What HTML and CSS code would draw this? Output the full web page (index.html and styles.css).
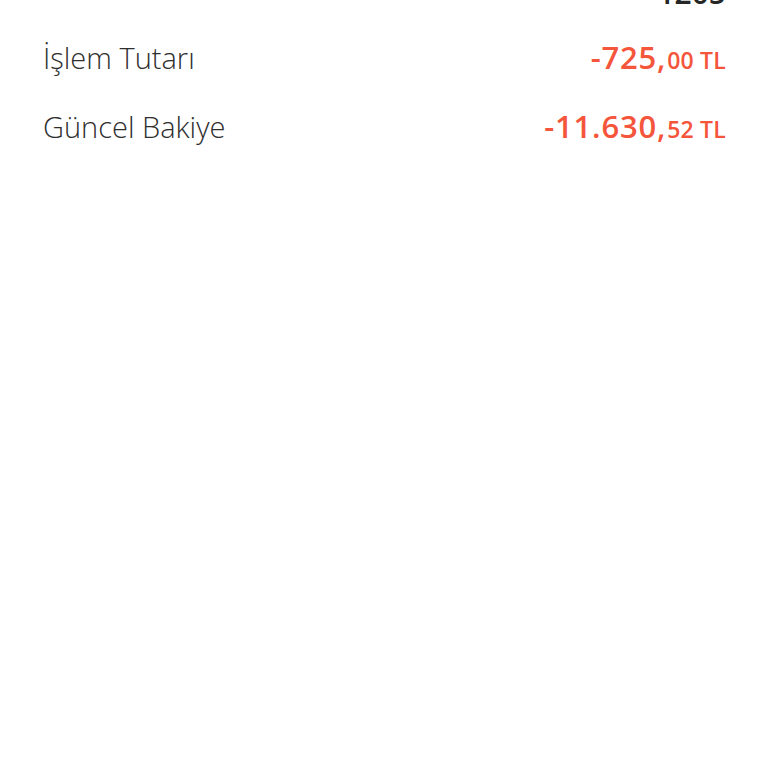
FILE: index.html
```html
<!DOCTYPE html>
<html lang="tr">
<head>
  <meta charset="UTF-8" />
  <meta name="viewport" content="width=device-width, initial-scale=1.0"/>
  <title>İşlem Detayı</title>
  <link rel="stylesheet" href="styles.css">
</head>
<body>

  <!-- Detay listesi -->
  <div class="details">
    <div class="row head">
      <span class="label"></span>
      <span class="value plain">1205</span>
    </div>
    <div class="row">
      <span class="label">İşlem Tutarı</span>
      <span class="value neg">-725,<small>00 TL</small></span>
    </div>
    <div class="row">
      <span class="label">Güncel Bakiye</span>
      <span class="value neg">-11.630,<small>52 TL</small></span>
    </div>
  </div>

</body>
</html>
```

FILE: styles.css
```css
* {
  box-sizing: border-box;
}

body {
  font-family: "Open Sans", Arial, sans-serif;
  background: #ffffff;
  color: #333333;
  margin: 0;
  padding: 0;
  overflow: hidden;
}

.details {
  margin-top: -39px;
  padding: 0 42px 0 43px;
}

.row {
  display: flex;
  justify-content: space-between;
  align-items: baseline;
  height: 69px;
  line-height: 69px;
}

.row.head {
  height: 62px;
  line-height: 64px;
}

.label {
  font-size: 29px;
  font-weight: 300;
  color: #2e2e2e;
}

.value {
  font-size: 31px;
  font-weight: 600;
  letter-spacing: 0.8px;
}

.value.plain {
  font-size: 30px;
  color: #262626;
  letter-spacing: 0;
}

.value.neg {
  color: #f4553b;
}

.value small {
  font-size: 23px;
  font-weight: 600;
  margin-left: 1px;
  letter-spacing: 0.2px;
}
```
